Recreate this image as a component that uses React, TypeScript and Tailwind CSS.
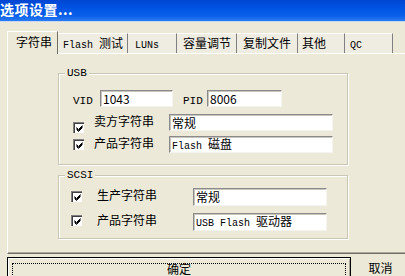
import React from "react";

const cjk = "font-['Noto_Sans_CJK_SC','Liberation_Sans',sans-serif]";
const mono = "font-['Liberation_Mono','Noto_Sans_CJK_SC',monospace] text-[10px]";

const M = ({ children }: { children: React.ReactNode }) => (
  <span className={`${mono} whitespace-pre`}>{children}</span>
);

const tabs = [
  { label: <>字符串</>, cls: "w-[51px] pl-[8px]", active: true },
  { label: <><M>Flash </M>测试</>, cls: "w-[70px] pl-[5px]" },
  { label: <M>LUNs</M>, cls: "w-[49px] pl-[7px]" },
  { label: <>容量调节</>, cls: "w-[60px] pl-[6px]" },
  { label: <>复制文件</>, cls: "w-[61px] pl-[6px]" },
  { label: <>其他</>, cls: "w-[47px] pl-[4px]" },
  { label: <M>QC</M>, cls: "w-[48px] pl-[5px]" },
];

const Check = ({ className = "" }: { className?: string }) => (
  <div
    className={`w-[11px] h-[11px] bg-white border-t border-l border-[#808080] border-r-white border-b-white shadow-[inset_1px_1px_0_#404040] flex items-center justify-center shrink-0 ${className}`}
  >
    <svg width="9" height="9" viewBox="0 0 9 9">
      <path d="M1.5 3.5 L3.5 5.5 L7.5 1.5 M1.5 4.5 L3.5 6.5 L7.5 2.5 M1.5 5.5 L3.5 7.5 L7.5 3.5" stroke="#000" strokeWidth="1" fill="none" />
    </svg>
  </div>
);

const Field = ({ children, className = "" }: { children?: React.ReactNode; className?: string }) => (
  <div
    className={`bg-white border border-t-[#8a8a8a] border-l-[#8a8a8a] border-r-[#f4f3ee] border-b-[#f4f3ee] shadow-[inset_1px_1px_0_#c8c6bc] flex items-center pl-[2px] text-[12px] leading-none text-black overflow-hidden whitespace-nowrap ${cjk} ${className}`}
  >
    <span>{children}</span>
  </div>
);

const Group = ({ title, className, children }: { title: string; className: string; children: React.ReactNode }) => (
  <div
    className={`relative ml-[50px] w-[290px] border border-[#c9c6b6] shadow-[inset_1px_1px_0_#fff,1px_1px_0_#fff] ${className}`}
  >
    <span className={`absolute left-[6px] top-[-8px] px-[2px] bg-[#ece9d8] text-black leading-[14px] ${mono} text-[11px]`}>
      {title}
    </span>
    {children}
  </div>
);

export default function App() {
  return (
    <div className={`w-[405px] h-[276px] overflow-hidden bg-[#ece9d8] flex flex-col text-black ${cjk}`}>
      <div className="h-[21px] shrink-0 bg-[linear-gradient(180deg,#0046d2_0%,#0054e3_40%,#0a5fe9_75%,#2a7cf3_100%)] text-white font-bold text-[14px] leading-[18px] tracking-[0.5px] whitespace-nowrap">
        选项设置...
      </div>
      <div className="h-px bg-[#c9d8ef] shrink-0" />

      <div className="mt-[9px] ml-[7px] flex items-end h-[22px] text-[12px] relative z-10">
        {tabs.map((t, i) =>
          t.active ? (
            <div
              key={i}
              className={`${t.cls} h-[23px] -mb-px bg-[#ece9d8] border-t border-l border-white border-r border-r-[#716f64] pt-[2px] leading-[16px] whitespace-nowrap`}
            >
              {t.label}
            </div>
          ) : (
            <div
              key={i}
              className={`${t.cls} h-[20px] bg-[#efede2] border-t border-white border-r border-r-[#808080] leading-[17px] whitespace-nowrap`}
            >
              {t.label}
            </div>
          )
        )}
      </div>

      <div className="ml-[7px] w-[420px] h-[201px] shrink-0 border-t border-l border-white border-b border-b-[#716f64] shadow-[inset_0_-1px_0_#aca899] text-[12px]">
        <Group title="USB" className="mt-[19px] h-[92px]">
          <div className="mt-[16px] flex items-end h-[17px]">
            <span className={`ml-[14px] w-[27px] ${mono} text-[11px] leading-[12px]`}>VID</span>
            <Field className="w-[73px] h-[17px] font-['Liberation_Sans',sans-serif] text-[11px]">1043</Field>
            <span className={`ml-[10px] w-[24px] ${mono} text-[11px] leading-[12px]`}>PID</span>
            <Field className="w-[75px] h-[17px] font-['Liberation_Sans',sans-serif] text-[11px]">8006</Field>
          </div>
          <div className="mt-[7px] flex items-start h-[17px]">
            <Check className="ml-[14px] mt-[8px]" />
            <span className="ml-[10px] w-[75px] leading-[14px]">卖方字符串</span>
            <Field className="w-[164px] h-[17px]">常规</Field>
          </div>
          <div className="mt-[5px] flex items-start h-[17px]">
            <Check className="ml-[14px] mt-[3px]" />
            <span className="ml-[10px] w-[75px] leading-[14px]">产品字符串</span>
            <Field className="w-[164px] h-[17px]">
              <M>Flash </M>磁盘
            </Field>
          </div>
        </Group>

        <Group title="SCSI" className="mt-[10px] h-[64px]">
          <div className="mt-[12px] flex items-start h-[18px]">
            <Check className="ml-[12px] mt-[3px]" />
            <span className="ml-[15px] w-[96px] leading-[14px]">生产字符串</span>
            <Field className="w-[134px] h-[18px]">常规</Field>
          </div>
          <div className="mt-[7px] flex items-start h-[18px]">
            <Check className="ml-[12px] mt-[2px]" />
            <span className="ml-[15px] w-[96px] leading-[14px]">产品字符串</span>
            <Field className="w-[134px] h-[18px]">
              <M>USB Flash </M>驱动器
            </Field>
          </div>
        </Group>
      </div>

      <div className="mt-[3px] flex items-start text-[12px]">
        <div className="ml-[7px] w-[350px] h-[24px] border border-black shadow-[inset_1px_1px_0_#fff,inset_-1px_-1px_0_#aca899] pt-[5px] px-[4px]">
          <div className="h-[16px] border border-dotted border-black border-b-0 text-center leading-[10px]">确定</div>
        </div>
        <div className="ml-[5px] w-[50px] text-center pt-[6px] leading-[10px]">取消</div>
      </div>
    </div>
  );
}
